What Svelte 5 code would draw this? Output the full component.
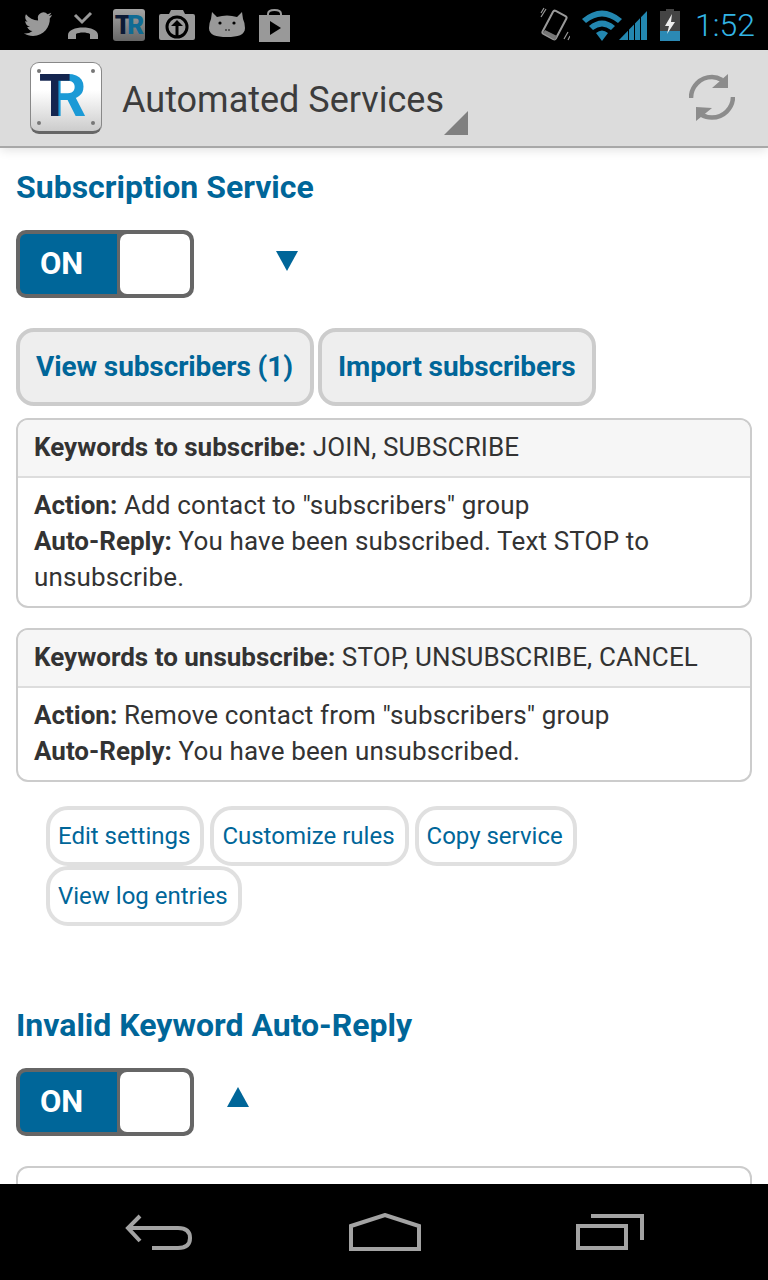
<script>
	const panels = [
		{
			label: 'Keywords to subscribe:',
			words: 'JOIN, SUBSCRIBE',
			action: 'Add contact to "subscribers" group',
			reply: 'You have been subscribed. Text STOP to unsubscribe.'
		},
		{
			label: 'Keywords to unsubscribe:',
			words: 'STOP, UNSUBSCRIBE, CANCEL',
			action: 'Remove contact from "subscribers" group',
			reply: 'You have been unsubscribed.'
		}
	];
	const links = ['Edit settings', 'Customize rules', 'Copy service', 'View log entries'];
</script>

<div class="phone">
	<header class="status">
		<div class="notify">
			<svg width="32" height="30" viewBox="0 0 32 30"><path fill="#999" d="M31 5c-1 .5-2 .8-3.300 1 1.200-.8 2-1.800 2.500-3.200-1.100.7-2.300 1.100-3.600 1.400A5.600 5.600 0 0 0 17 9.200c0 .4 0 .9.100 1.300C12.400 10.300 7.900 8 5 4.200c-1.500 2.700-.7 5.900 1.800 7.600-.9 0-1.800-.3-2.600-.7 0 2.800 2 5.100 4.600 5.700-.8.200-1.700.2-2.600.1.800 2.300 2.900 3.900 5.300 4-2.600 2-5.600 2.800-8.500 2.400C5.600 25 8.600 26 12 26c11 0 17.200-9.300 16.800-17.700 1-.8 1.700-2 2.200-3.300z"/></svg>
			<svg width="32" height="30" viewBox="0 0 32 30"><path fill="none" stroke="#999" stroke-width="3" d="M8 5l7 7 9-9"/><path fill="#999" d="M1 25c0-10 30-10 30 0v4h-8v-5c-3-2-11-2-14 0v5H1z"/></svg>
			<div class="mini-tr"><span class="t">T</span><span class="r">R</span></div>
			<svg width="36" height="32" viewBox="0 0 36 32"><path fill="#999" d="M2 5h8l2-4h12l2 4h8q2 0 2 2v22q0 2-2 2H2q-2 0-2-2V7q0-2 2-2z"/><circle cx="18" cy="18" r="10" fill="none" stroke="#000" stroke-width="3"/><path fill="#000" d="M18 11l6 6h-4.500v10h-3V17H12z"/></svg>
			<svg width="36" height="28" viewBox="0 0 36 28"><path fill="#999" d="M3 1l5 5q10-3 20 0l5-5 1 7q2 4 2 9c0 7-7 9-18 9S0 24 0 17q0-5 2-9z"/><circle cx="11" cy="12" r="1.600" fill="#000"/><circle cx="25" cy="12" r="1.600" fill="#000"/><circle cx="17" cy="19" r=".8" fill="#000"/><circle cx="20" cy="19" r=".8" fill="#000"/></svg>
			<svg width="31" height="34" viewBox="0 0 31 34"><path fill="none" stroke="#999" stroke-width="2" d="M9 8V6q0-4 6.500-4T22 6v2"/><path fill="#999" d="M0 7h31v27H0z"/><path fill="#000" d="M11 13l11 7-11 7z"/></svg>
		</div>
		<div class="system">
			<svg width="30" height="36" viewBox="0 0 30 36"><g fill="none" stroke="#999"><rect x="7" y="5" width="15" height="26" rx="2" stroke-width="2" transform="rotate(28 14.500 18)"/><path stroke-width="1.200" d="M6 2L1 10M4 1L1 6M28 25l-4 7M30 29l-2 4"/></g><path fill="#777" d="M3 26l12 7 2-4-12-6z"/></svg>
			<div class="radio">
				<svg width="40" height="32" viewBox="0 0 40 32"><path fill="#2387b0" d="M0 10q20-17 40 0l-4 4q-16-13-32 0zM7 17q13-11 26 0l-4 4q-9-7-18 0zM14 24q6-5 12 0l-6 8z"/></svg>
				<svg width="29" height="32" viewBox="0 0 29 32"><path fill="#2387b0" d="M0 31L28 2v29z"/><path fill="#000" d="M9 20v12h1V19zM15 14v18h1V13zM21 8v24h1V7z"/></svg>
			</div>
			<svg width="20" height="32" viewBox="0 0 20 32"><path fill="#444" d="M6 0h8v2h6v30H0V2h6z"/><path fill="#2b89b4" d="M0 22h20v10H0z"/><path fill="#eee" d="M12 5L5 17h4l-2 8 8-12h-4z"/></svg>
			<span class="clock">1:52</span>
		</div>
	</header>

	<div class="actionbar">
		<div class="logo">
			<i class="screw a"></i><i class="screw b"></i><i class="screw c"></i><i class="screw d"></i>
			<span class="logo-r">R</span><span class="logo-t">T</span>
		</div>
		<div class="title">Automated Services<span class="corner"></span></div>
		<svg class="refresh" width="46" height="48" viewBox="0 0 46 48">
			<path fill="none" stroke="#8c8c8c" stroke-width="4.500" d="M2 24A21 21 0 0 1 23 3q5 0 10 3M44 23A21 21 0 0 1 23 43.500q-6 0-11-3"/>
			<path fill="#8c8c8c" d="M39 0v14H23zM7 33v14L23 34z"/>
		</svg>
	</div>

	<main class="content">
		<section class="service">
			<h2>Subscription Service</h2>
			<div class="toggle-row">
				<div class="switch"><span class="on">ON</span><span class="knob"></span></div>
				<span class="arrow down"></span>
			</div>
			<div class="big-buttons">
				<button>View subscribers (1)</button>
				<button>Import subscribers</button>
			</div>
			{#each panels as p}
				<div class="panel">
					<div class="panel-head"><b>{p.label}</b> {p.words}</div>
					<div class="panel-body">
						<b>Action:</b> {p.action}<br />
						<b>Auto-Reply:</b> {p.reply}
					</div>
				</div>
			{/each}
			<div class="links">
				{#each links as l}
					<a href="#top">{l}</a>
				{/each}
			</div>
		</section>

		<section class="service second">
			<h2>Invalid Keyword Auto-Reply</h2>
			<div class="toggle-row">
				<div class="switch"><span class="on">ON</span><span class="knob"></span></div>
				<span class="arrow up"></span>
			</div>
			<div class="panel cut"></div>
		</section>
	</main>

	<nav class="softkeys">
		<svg width="68" height="36" viewBox="0 0 68 36"><path fill="none" stroke="#a3a3a3" stroke-width="4" d="M15 2L3 14l12 13M3 14h50q12 0 12 10T53 34H27"/></svg>
		<svg width="72" height="38" viewBox="0 0 72 38"><path fill="none" stroke="#a3a3a3" stroke-width="4" d="M2 13L36 2l34 11v23H2z"/></svg>
		<svg width="68" height="36" viewBox="0 0 68 36"><path fill="none" stroke="#a3a3a3" stroke-width="4" d="M2 12h48v22H2zM15 2h51v24"/></svg>
	</nav>
</div>

<style>
	:global(body) {
		margin: 0;
		background: #fff;
	}
	.phone {
		width: 768px;
		height: 1280px;
		display: flex;
		flex-direction: column;
		overflow: hidden;
		font-family: Roboto, "Liberation Sans", sans-serif;
		color: #333;
	}
	.status {
		height: 50px;
		flex: none;
		background: #000;
		display: flex;
		align-items: center;
		justify-content: space-between;
		padding: 0 13px 0 21px;
	}
	.notify {
		display: flex;
		align-items: center;
		gap: 14px;
	}
	.mini-tr {
		width: 32px;
		height: 32px;
		box-sizing: border-box;
		border-radius: 3px;
		background: linear-gradient(#a5a5a5, #666);
		display: flex;
		align-items: center;
		justify-content: center;
		font-weight: 900;
		font-size: 26px;
		letter-spacing: -4px;
		padding-right: 3px;
	}
	.mini-tr .t { color: #0c1a36; }
	.mini-tr .r { color: #0f6b94; }
	.system {
		display: flex;
		align-items: center;
		gap: 12px;
	}
	.radio {
		display: flex;
		align-items: center;
	}
	.radio svg + svg { margin-left: -3px; }
	.clock {
		color: #33b5e5;
		font-size: 32px;
		font-weight: 300;
		margin-left: 3px;
	}
	.actionbar {
		height: 98px;
		flex: none;
		box-sizing: border-box;
		background: #dcdcdc;
		border-bottom: 2px solid #a8a8a8;
		box-shadow: 0 2px 10px rgba(0, 0, 0, 0.12);
		display: flex;
		align-items: center;
		padding: 0 33px 0 30px;
		position: relative;
		z-index: 1;
	}
	.logo {
		width: 72px;
		height: 72px;
		box-sizing: border-box;
		border: 1px solid #888;
		border-bottom: 3px solid #666;
		border-radius: 9px;
		background: linear-gradient(#fff, #fff 40%, #ccc);
		position: relative;
		flex: none;
		font-weight: 700;
		font-size: 60px;
		line-height: 60px;
	}
	.screw {
		position: absolute;
		width: 4px;
		height: 4px;
		border-radius: 50%;
		background: #777;
	}
	.screw.a { left: 6px; top: 6px; }
	.screw.b { right: 6px; top: 6px; }
	.screw.c { left: 6px; bottom: 6px; }
	.screw.d { right: 6px; bottom: 6px; }
	.logo-t {
		position: absolute;
		left: 8px;
		top: 3px;
		color: #14254f;
		transform: scaleX(0.85);
		transform-origin: left;
	}
	.logo-r {
		position: absolute;
		left: 17px;
		top: 3px;
		color: #1b9ad6;
	}
	.title {
		font-size: 36px;
		color: #3c3c3c;
		margin: 3px 0 0 20px;
		position: relative;
		padding-right: 25px;
		flex: 1;
	}
	.corner {
		position: absolute;
		left: 322px;
		bottom: -14px;
		width: 0;
		height: 0;
		border-style: solid;
		border-width: 0 0 24px 24px;
		border-color: transparent transparent #808080 transparent;
	}
	.content {
		flex: 1;
		min-height: 0;
		overflow: hidden;
		padding: 0 16px;
	}
	.service {
		display: flex;
		flex-direction: column;
	}
	.second {
		margin-top: 81px;
	}
	h2 {
		margin: 0;
		padding-top: 21px;
		font-size: 32px;
		line-height: 36px;
		font-weight: 700;
		color: #006699;
	}
	.second h2 {
		padding-top: 0;
	}
	.toggle-row {
		display: flex;
		align-items: center;
		margin-top: 25px;
	}
	.switch {
		width: 178px;
		height: 68px;
		box-sizing: border-box;
		border: 4px solid #666;
		border-radius: 10px;
		display: flex;
		overflow: hidden;
		background: #666;
	}
	.on {
		width: 97px;
		background: #006699;
		color: #fff;
		font-weight: 700;
		font-size: 31px;
		line-height: 60px;
		padding-left: 20px;
		box-sizing: border-box;
	}
	.knob {
		flex: 1;
		margin-left: 3px;
		background: #fff;
		border-radius: 7px;
	}
	.arrow {
		width: 0;
		height: 0;
		border-left: 11px solid transparent;
		border-right: 11px solid transparent;
	}
	.arrow.down {
		border-top: 20px solid #006699;
		margin: -6px 0 0 82px;
	}
	.arrow.up {
		border-bottom: 20px solid #006699;
		margin: -10px 0 0 33px;
	}
	.big-buttons {
		display: flex;
		gap: 4px;
		margin: 30px 0 12px;
	}
	button {
		height: 78px;
		padding: 0 17px 2px 16px;
		box-sizing: border-box;
		border: 4px solid #ccc;
		border-radius: 18px;
		background: #eee;
		color: #006699;
		font: 700 28px Roboto, "Liberation Sans", sans-serif;
		letter-spacing: -0.1px;
	}
	.panel {
		border: 2px solid #ccc;
		border-radius: 12px;
		font-size: 26px;
		letter-spacing: 0.15px;
		line-height: 36px;
		margin-bottom: 20px;
		overflow: hidden;
	}
	.panel b {
		letter-spacing: 0;
	}
	.panel-head {
		background: #f6f6f6;
		border-bottom: 2px solid #ddd;
		padding: 9px 16px 11px;
	}
	.panel-body {
		padding: 9px 16px 11px;
	}
	.links {
		display: flex;
		flex-wrap: wrap;
		padding: 4px 150px 0 30px;
		column-gap: 6px;
	}
	.links a {
		height: 60px;
		box-sizing: border-box;
		border: 4px solid #e0e0e0;
		border-radius: 22px;
		padding: 0 10px 0 8px;
		font-size: 24px;
		line-height: 52px;
		color: #006699;
		text-decoration: none;
	}
	.cut {
		height: 120px;
		margin: 30px 0 0;
	}
	.softkeys {
		height: 96px;
		flex: none;
		box-sizing: border-box;
		background: #000;
		display: flex;
		align-items: center;
		justify-content: space-between;
		padding: 0 124px 0 125px;
	}
</style>
